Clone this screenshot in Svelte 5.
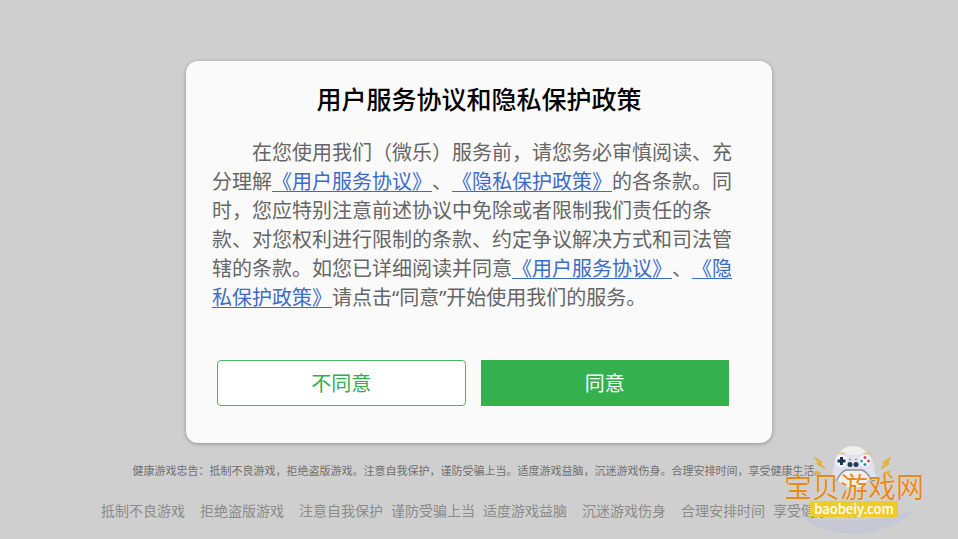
<script lang="ts">
	const advice = [
		{ text: '抵制不良游戏', wide: true },
		{ text: '拒绝盗版游戏', wide: true },
		{ text: '注意自我保护', wide: false },
		{ text: '谨防受骗上当', wide: false },
		{ text: '适度游戏益脑', wide: true },
		{ text: '沉迷游戏伤身', wide: true },
		{ text: '合理安排时间', wide: false },
		{ text: '享受健康生活', wide: false }
	];

	let answer = $state('');
</script>

<main lang="zh-CN" data-answer={answer}>
	<section class="dialog" role="dialog" aria-labelledby="dialog-title">
		<h1 id="dialog-title">用户服务协议和隐私保护政策</h1>
		<p class="terms">
			在您使用我们（微乐）服务前，请您务必审慎阅读、充分理解<a href="#service">《用户服务协议》</a>、<a href="#privacy">《隐私保护政策》</a>的各条款。同时，您应特别注意前述协议中免除或者限制我们责任的条款、对您权利进行限制的条款、约定争议解决方式和司法管辖的条款。如您已详细阅读并同意<a href="#service">《用户服务协议》</a>、<a href="#privacy">《隐私保护政策》</a>请点击“同意”开始使用我们的服务。
		</p>
		<div class="actions">
			<button class="decline" onclick={() => (answer = 'declined')}>不同意</button>
			<button class="accept" onclick={() => (answer = 'accepted')}>同意</button>
		</div>
	</section>

	<p class="notice">健康游戏忠告：抵制不良游戏，拒绝盗版游戏。注意自我保护，谨防受骗上当。适度游戏益脑，沉迷游戏伤身。合理安排时间，享受健康生活。</p>

	<div class="advice">
		{#each advice as item}
			<span class:wide={item.wide}>{item.text}</span>
		{/each}
	</div>

	<div class="watermark">
		<svg class="art" viewBox="0 0 140 92" aria-hidden="true">
			<path d="M15 70Q68 84 131 65Q110 87 70 89Q36 88 15 70Z" fill="#c6c8d4" />
			<ellipse cx="69" cy="22" rx="19" ry="21" fill="#efefed" />
			<!-- gamepad -->
			<g transform="translate(1 1)">
				<path d="M55 8Q60 6 64 9H74Q78 6 83 8Q88 11 89 20L91 32Q89 37 86 34Q83 26 77 24H61Q55 26 52 34Q49 37 47 32L49 20Q50 11 55 8Z" fill="#dfe1ec" />
				<path d="M48 34Q51 36 53 32Q56 26 61 24H77Q82 26 85 32Q87 36 90 34" fill="none" stroke="#8d91a5" stroke-width="1.500" />
				<path d="M53 8Q56 6 60 8M79 8Q82 6 86 8" fill="none" stroke="#dfc979" stroke-width="1.500" />
				<circle cx="56.500" cy="15" r="6" fill="#f6f7fb" />
				<circle cx="80" cy="15" r="6" fill="#f6f7fb" />
				<path d="M55 11h3v2.500h2.500v3h-2.500v2.500h-3v-2.500h-2.500v-3h2.500z" fill="#19354b" />
				<circle cx="80" cy="11.500" r="1.500" fill="#d94c5b" />
				<circle cx="83.500" cy="15" r="1.500" fill="#d94c5b" />
				<circle cx="80" cy="18.500" r="1.500" fill="#388bac" />
				<circle cx="76.500" cy="15" r="1.500" fill="#3ea6a2" />
				<circle cx="65" cy="18.500" r="2.500" fill="#203d53" />
				<circle cx="71" cy="18.500" r="2.500" fill="#203d53" />
				<path d="M64 13.500h2M70 13.500h2" stroke="#d65b6c" stroke-width="1" />
			</g>
			<!-- sparks -->
			<path d="M30 12L38 17L37 19L41 24L33 19L34 17ZM107 12L99 17L100 19L97 24L105 19L104 17ZM31 26L37 28L35 31ZM99 28L106 26L105 29Z" fill="#e9b92c" stroke="#dc9d1d" stroke-width="0.500" />
		</svg>
		<strong>宝贝游戏网</strong>
		<span class="domain">baobeiy.com</span>
	</div>
</main>

<style>
	:global(body) {
		margin: 0;
		background: #cfcfcf;
	}

	main {
		position: relative;
		box-sizing: border-box;
		min-height: 100vh;
		padding-top: 61px;
		overflow: hidden;
		font-family: 'Noto Sans', 'Noto Sans CJK SC', sans-serif;
		text-spacing-trim: space-all;
		background: #cfcfcf;
	}

	.dialog {
		box-sizing: border-box;
		width: calc(100% - 32px);
		max-width: 586px;
		margin: 0 auto;
		padding: 18px 40px 37px 26px;
		border-radius: 12px;
		background: #fafafa;
		box-shadow: 0 1px 4px rgba(0, 0, 0, 0.3);
	}

	h1 {
		margin: 0 -14px 21px 0;
		color: #000;
		font-family: 'Noto Sans CJK SC', sans-serif;
		font-size: 25px;
		font-weight: 500;
		line-height: 38px;
		text-align: center;
	}

	.terms {
		margin: 0 0 48px;
		color: #666;
		font-size: 20px;
		line-height: 29px;
		text-indent: 2em;
	}

	.terms a {
		color: #3c6cc8;
		text-decoration: underline;
		text-decoration-thickness: 1px;
		text-underline-offset: 2px;
	}

	.actions {
		display: flex;
		gap: 15px;
		padding: 0 3px 0 5px;
	}

	button {
		flex: 1 1 0;
		box-sizing: border-box;
		min-width: 0;
		height: 46px;
		padding: 2px 0 0;
		font-family: inherit;
		font-size: 20px;
		line-height: 28px;
		cursor: pointer;
	}

	.decline {
		border: 1px solid #4bb266;
		border-radius: 4px;
		background: #fff;
		color: #34ac50;
	}

	.accept {
		border: 1px solid #34b04e;
		background: #34b04e;
		color: #fff;
	}

	.notice {
		margin: 20px 0 0;
		color: #707070;
		font-size: 11px;
		line-height: 16px;
		text-align: center;
	}

	.advice {
		display: flex;
		justify-content: center;
		margin-top: 22px;
		color: #8b8b8b;
		font-size: 14px;
		line-height: 20px;
		white-space: nowrap;
	}

	.advice span {
		margin-right: 8px;
	}

	.advice .wide {
		margin-right: 15px;
	}

	.advice span:last-child {
		margin-right: 0;
	}

	/* site mark overlaps both lines of the footer */
	.watermark {
		position: absolute;
		right: 34px;
		bottom: 2px;
		display: flex;
		flex-direction: column;
		align-items: center;
		width: 140px;
		height: 92px;
	}

	.art {
		position: absolute;
		inset: 0;
		width: 100%;
		height: 100%;
	}

	.watermark strong {
		position: relative;
		margin-top: 28px;
		color: #e78a1e;
		font-size: 28px;
		font-weight: 400;
		line-height: 28px;
		text-shadow: 0 0 1px #fff;
		white-space: nowrap;
	}

	.domain {
		position: relative;
		padding: 0 4px;
		background: #ebcc2d;
		color: #fff;
		font-family: 'Noto Sans CJK SC', sans-serif;
		font-size: 13px;
		font-weight: 500;
		line-height: 16px;
	}
</style>
